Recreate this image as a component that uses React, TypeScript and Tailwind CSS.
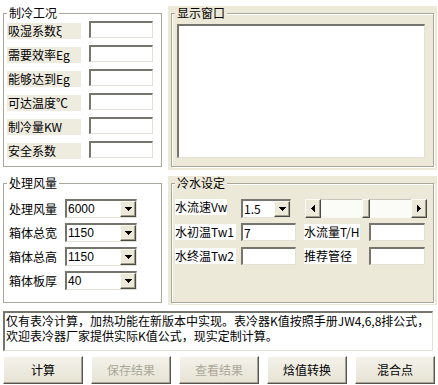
import React from 'react';

const sunken =
  'border-t-2 border-l-2 border-r border-b border-t-[#75746d] border-l-[#75746d] border-r-[#e3e1d5] border-b-[#e3e1d5] bg-white';
const raised =
  'bg-[#ece9d8] border border-t-[#fbfaf6] border-l-[#fbfaf6] border-r-[#4a4943] border-b-[#4a4943] shadow-[inset_-1px_-1px_0_#a19e90]';

function DownArrow() {
  return (
    <svg width="7" height="4" shapeRendering="crispEdges">
      <rect x="0" y="0" width="7" height="1" />
      <rect x="1" y="1" width="5" height="1" />
      <rect x="2" y="2" width="3" height="1" />
      <rect x="3" y="3" width="1" height="1" />
    </svg>
  );
}

function SideArrow({ right }: { right?: boolean }) {
  return (
    <svg width="4" height="7" shapeRendering="crispEdges" className={right ? 'scale-x-[-1]' : ''}>
      <rect x="0" y="3" width="1" height="1" />
      <rect x="1" y="2" width="1" height="3" />
      <rect x="2" y="1" width="1" height="5" />
      <rect x="3" y="0" width="1" height="7" />
    </svg>
  );
}

function Group({ title, className, legendBg, children }: { title: string; className: string; legendBg: string; children?: React.ReactNode }) {
  return (
    <fieldset className={`border border-[#a9a79c] ${className}`}>
      <legend className={`ml-[3px] px-[2px] leading-[14px] ${legendBg}`}>{title}</legend>
      {children}
    </fieldset>
  );
}

function Combo({ value, className, textClass }: { value: string; className: string; textClass: string }) {
  return (
    <div className={`${sunken} flex h-[19px] shrink-0 items-stretch justify-between ${className}`}>
      <span className={`pl-[1px] leading-[16px] ${textClass}`}>{value}</span>
      <div className={`${raised} flex w-[16px] items-center justify-center`}>
        <DownArrow />
      </div>
    </div>
  );
}

const coolRows = ['吸湿系数ξ', '需要效率Eg', '能够达到Eg', '可达温度℃', '制冷量KW', '安全系数'];
const airRows = [
  ['处理风量', '6000'],
  ['箱体总宽', '1150'],
  ['箱体总高', '1150'],
  ['箱体板厚', '40'],
];
const buttons: [string, boolean][] = [
  ['计算', false],
  ['保存结果', true],
  ['查看结果', true],
  ['焓值转换', false],
  ['混合点', false],
];

export default function App() {
  return (
    <div className="flex h-[385px] w-[438px] flex-col overflow-hidden bg-white font-['Noto_Sans_CJK_SC',sans-serif] text-[12px] text-black">
      <div className="flex h-[170px] items-start">
        <Group title="制冷工况" className="ml-[3px] mt-[6px] h-[161px] w-[159px]" legendBg="bg-white">
          <div className="pt-[1px]">
            {coolRows.map((label) => (
              <div key={label} className="flex h-[24px] items-start">
                <div className="ml-[3px] mt-[2px] h-[16px] w-[74px] bg-[#eeebdf] pl-[1px] leading-[16px] whitespace-nowrap">{label}</div>
                <div className={`ml-[8px] h-[17px] w-[64px] ${sunken}`} />
              </div>
            ))}
          </div>
        </Group>
        <div className="ml-[6px] mt-[6px] h-[164px] w-[269px] bg-[#ece9d8]">
          <Group
            title="显示窗口"
            className="ml-[3px] h-[161px] w-[263px] shadow-[inset_1px_1px_0_#fff,1px_1px_0_#fff]"
            legendBg="bg-[#ece9d8]"
          >
            <div className={`ml-[5px] mt-[4px] h-[134px] w-[248px] ${sunken}`} />
          </Group>
        </div>
      </div>

      <div className="mt-[6px] flex h-[129px] items-start">
        <Group title="处理风量" className="ml-[3px] h-[127px] w-[159px]" legendBg="bg-white">
          <div className="pt-[9px]">
            {airRows.map(([label, value]) => (
              <div key={label} className="flex h-[24px] items-start">
                <div className="ml-[5px] w-[56px] leading-[19px] whitespace-nowrap">{label}</div>
                <Combo value={value} className="w-[72px]" textClass="font-['Liberation_Sans',sans-serif]" />
              </div>
            ))}
          </div>
        </Group>
        <div className="ml-[6px] h-[129px] w-[269px] bg-[#ece9d8]">
          <Group
            title="冷水设定"
            className="ml-[3px] h-[127px] w-[263px] shadow-[inset_1px_1px_0_#fff,1px_1px_0_#fff]"
            legendBg="bg-[#ece9d8]"
          >
            <div className="pt-[9px]">
              <div className="flex h-[24px] items-start">
                <div className="ml-[3px] h-[16px] w-[52px] shrink-0 bg-white leading-[16px] whitespace-nowrap">水流速Vw</div>
                <Combo value="1.5" className="ml-[14px] w-[50px]" textClass="" />
                <div className="ml-[14px] flex h-[19px] w-[122px] shrink-0 items-stretch">
                  <div className={`${raised} flex w-[16px] items-center justify-center`}>
                    <SideArrow />
                  </div>
                  <div className="flex-1 border-t border-[#c9c7bb] bg-[#fbfbf8]" />
                  <div className={`${raised} w-[8px]`} />
                  <div className="flex-1 border-t border-[#c9c7bb] bg-[#fbfbf8]" />
                  <div className={`${raised} flex w-[16px] items-center justify-center`}>
                    <SideArrow right />
                  </div>
                </div>
              </div>
              <div className="flex h-[24px] items-start whitespace-nowrap">
                <div className="ml-[3px] mt-[1px] h-[16px] w-[61px] shrink-0 bg-white leading-[16px]">水初温Tw1</div>
                <div className={`ml-[5px] h-[18px] w-[55px] shrink-0 pl-[1px] leading-[15px] ${sunken}`}>7</div>
                <div className="ml-[8px] mt-[1px] h-[16px] w-[56px] shrink-0 bg-white leading-[16px]">水流量T/H</div>
                <div className={`ml-[9px] h-[18px] w-[56px] shrink-0 ${sunken}`} />
              </div>
              <div className="flex h-[24px] items-start whitespace-nowrap">
                <div className="ml-[3px] mt-[1px] h-[16px] w-[61px] shrink-0 bg-white leading-[16px]">水终温Tw2</div>
                <div className={`ml-[5px] h-[18px] w-[55px] shrink-0 ${sunken}`} />
                <div className="ml-[8px] mt-[1px] h-[16px] w-[53px] shrink-0 bg-white leading-[16px]">推荐管径</div>
                <div className={`ml-[12px] h-[18px] w-[56px] shrink-0 ${sunken}`} />
              </div>
            </div>
          </Group>
        </div>
      </div>

      <div className={`ml-[3px] mt-[6px] h-[40px] w-[430px] whitespace-nowrap pl-[1px] leading-[15px] ${sunken}`}>
        <div>仅有表冷计算，加热功能在新版本中实现。表冷器K值按照手册JW4,6,8排公式，</div>
        <div>欢迎表冷器厂家提供实际K值公式，现实定制计算。</div>
      </div>

      <div className="ml-[3px] mt-[5px] flex gap-[8px]">
        {buttons.map(([t, disabled]) => (
          <button
            key={t}
            className={`h-[28px] w-[80px] bg-gradient-to-b from-[#f4f2ea] to-[#e6e3d4] border border-t-white border-l-white border-r-[#55544d] border-b-[#55544d] shadow-[inset_-1px_-1px_0_#a8a597] ${
              disabled ? 'text-[#aca899]' : 'text-black'
            }`}
          >
            {t}
          </button>
        ))}
      </div>
    </div>
  );
}
